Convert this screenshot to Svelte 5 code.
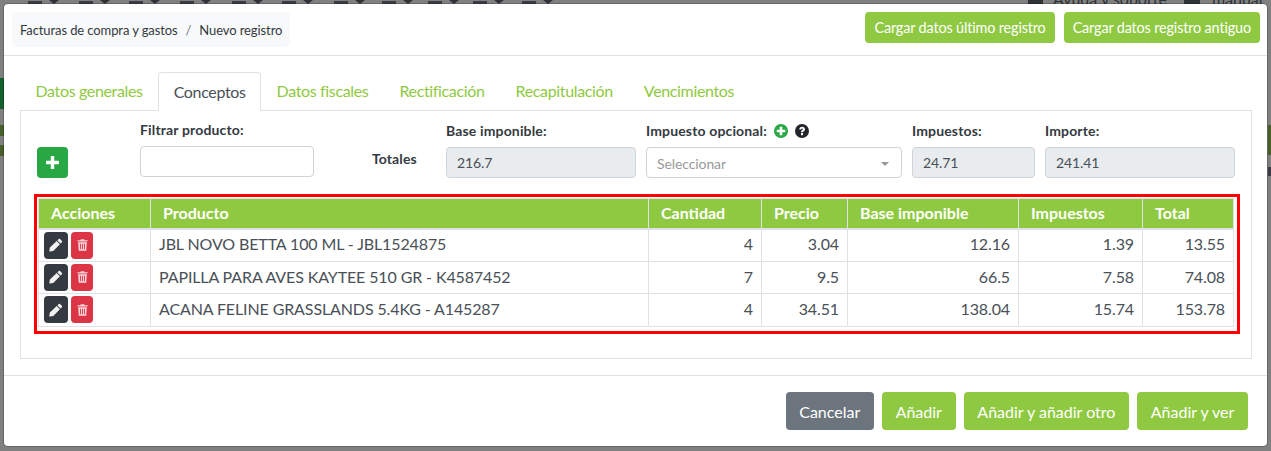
<script>
  const tabs = ['Datos generales', 'Conceptos', 'Datos fiscales', 'Rectificación', 'Recapitulación', 'Vencimientos'];
  const columns = ['Acciones', 'Producto', 'Cantidad', 'Precio', 'Base imponible', 'Impuestos', 'Total'];
  const rows = [
    { name: 'JBL NOVO BETTA 100 ML - JBL1524875', qty: 4, price: 3.04, base: 12.16, tax: 1.39, total: 13.55 },
    { name: 'PAPILLA PARA AVES KAYTEE 510 GR - K4587452', qty: 7, price: 9.5, base: 66.5, tax: 7.58, total: 74.08 },
    { name: 'ACANA FELINE GRASSLANDS 5.4KG - A145287', qty: 4, price: 34.51, base: 138.04, tax: 15.74, total: 153.78 }
  ];
  // toolbar of the page behind the modal, only its lower edge shows
  const carets = [54, 105, 155, 206, 258, 308, 360, 408, 454, 499, 548];
</script>

<div class="overlay">
  <svg class="behind" width="1271" height="451" aria-hidden="true">
    {#each carets as x}
      <path d="M{x - 5} 0h10l-5 4z" fill="#2f3338" />
      <rect x={x - 26} y="1" width="14" height="3" fill="#3a3e44" />
    {/each}
    <rect x="0" y="78" width="4" height="31" fill="#14602c" />
    <rect x="0" y="125" width="4" height="11" fill="#47602a" />
    <rect x="0" y="145" width="4" height="11" fill="#47602a" />
    <rect x="1268" y="125" width="3" height="30" fill="#47602a" />
    <rect x="1268" y="167" width="3" height="9" fill="#3a3a48" />
    <rect x="1028" y="0" width="15" height="4" fill="#2f3338" />
    <rect x="1184" y="0" width="16" height="4" fill="#2f3338" />
  </svg>
  <div class="behind-text"><span>Ayuda y soporte</span><span>manual</span></div>

  <div class="modal">
    <header class="head">
      <nav class="crumbs"><span>Facturas de compra y gastos</span><i>/</i><span>Nuevo registro</span></nav>
      <div class="head-actions">
        <button class="btn green small">Cargar datos último registro</button>
        <button class="btn green small">Cargar datos registro antiguo</button>
      </div>
    </header>

    <div class="body">
      <ul class="tabs">
        {#each tabs as tab}
          <li class:active={tab === 'Conceptos'}>{tab}</li>
        {/each}
      </ul>

      <section class="pane">
        <div class="filters">
          <button class="add" aria-label="Añadir">
            <svg viewBox="0 0 14 14" width="15" height="15"><path d="M5.4 1h3.2v4.400H13v3.200H8.600V13H5.400V8.600H1V5.400h4.400z" fill="#fff"/></svg>
          </button>
          <label class="field filter"><span>Filtrar producto:</span><input type="text" /></label>
          <div class="totals">Totales</div>
          <label class="field base"><span>Base imponible:</span><input type="text" value="216.7" disabled /></label>
          <div class="field optional">
            <span>Impuesto opcional:
              <svg class="ic" viewBox="0 0 16 16" width="14" height="14"><circle cx="8" cy="8" r="8" fill="#28a745"/><path d="M6.500 3.200h3v3.300h3.300v3H9.500v3.300h-3V9.500H3.200v-3h3.300z" fill="#fff"/></svg>
              <svg class="ic second" viewBox="0 0 16 16" width="14" height="14"><circle cx="8" cy="8" r="8" fill="#212529"/><path d="M4.900 6.200C5 4.400 6.300 3.100 8.200 3.100c1.800 0 3.200 1.100 3.200 2.800 0 1.200-.7 1.900-1.500 2.400-.6.400-.7.600-.7 1.100H6.900c0-1.200.4-1.800 1.200-2.300.6-.4.9-.7.900-1.100 0-.5-.4-.8-.9-.8-.6 0-1 .4-1.100 1.100zM6.900 10.400h2.300v2.400H6.900z" fill="#fff"/></svg>
            </span>
            <div class="select">Seleccionar<b></b></div>
          </div>
          <label class="field tax"><span>Impuestos:</span><input type="text" value="24.71" disabled /></label>
          <label class="field amount"><span>Importe:</span><input type="text" value="241.41" disabled /></label>
        </div>

        <div class="marked">
          <table>
            <thead>
              <tr>
                {#each columns as col}<th>{col}</th>{/each}
              </tr>
            </thead>
            <tbody>
              {#each rows as row}
                <tr>
                  <td class="acts">
                    <button class="mini dark" aria-label="Editar">
                      <svg viewBox="0 0 14 14" width="14" height="14"><path d="M9.700 1.100a1 1 0 0 1 1.400 0l1.800 1.800a1 1 0 0 1 0 1.400l-1.300 1.300-3.200-3.200zM7.700 3.100l3.200 3.200-6.600 6.600-3.500.6a.4.4 0 0 1-.5-.5l.6-3.500z" fill="#f1f1f1"/></svg>
                    </button>
                    <button class="mini red" aria-label="Eliminar">
                      <svg viewBox="0 0 12 14" width="11" height="14"><path d="M4.200.7h3.600l.5 1H11.500v1.500H.5V1.700h3.200zM1.300 4h9.400l-.6 9.300H1.900zM3.300 5.500v6.200h1V5.500zm2.200 0v6.200h1V5.500zm2.200 0v6.200h1V5.500z" fill="#f8d7da" fill-rule="evenodd"/></svg>
                    </button>
                  </td>
                  <td>{row.name}</td>
                  <td class="num">{row.qty}</td>
                  <td class="num">{row.price}</td>
                  <td class="num">{row.base}</td>
                  <td class="num">{row.tax}</td>
                  <td class="num">{row.total}</td>
                </tr>
              {/each}
            </tbody>
          </table>
        </div>
      </section>
    </div>

    <footer class="foot">
      <button class="btn gray">Cancelar</button>
      <button class="btn green">Añadir</button>
      <button class="btn green">Añadir y añadir otro</button>
      <button class="btn green">Añadir y ver</button>
    </footer>
  </div>
</div>

<style>
  :global(body) { background: #808080; font-family: Lato, sans-serif; color: #212529; }
  .overlay { position: relative; width: 1271px; height: 451px; overflow: hidden; padding: 4px 4px 5px 4px; box-sizing: border-box; }
  .behind { position: absolute; left: 0; top: 0; }
  .behind-text { position: absolute; left: 1053px; top: -11px; font-size: 16px; color: #2f3338; display: flex; gap: 45px; white-space: nowrap; }
  .modal { position: relative; background: #fff; height: 442px; border-radius: 4px; display: flex; flex-direction: column; box-shadow: 0 0 0 1px rgba(0, 0, 0, .2); }
  button { font-family: inherit; border: 0; cursor: pointer; }

  .head { height: 52px; box-sizing: border-box; border-bottom: 1px solid #dee2e6; padding: 8px 7px 0 8px; display: flex; justify-content: space-between; align-items: flex-start; }
  .crumbs { height: 35px; background: #f8f9fa; border-radius: 4px; padding: 0 8px; display: flex; align-items: center; font-size: 13px; letter-spacing: -.1px; color: #343a40; white-space: nowrap; }
  .crumbs i { font-style: normal; color: #6c757d; margin: 0 8px; }
  .head-actions { display: flex; gap: 9px; }
  .btn { color: #fff; border-radius: 4px; font-size: 16px; height: 38px; padding: 0 13.7px; }
  .btn.small { font-size: 14.4px; letter-spacing: -.14px; height: 31px; padding: 0 9px; }
  .green { background: #8fc942; }
  .gray { background: #6c757d; }

  .body { flex: 1; padding: 16px 15px 0 16px; }
  .tabs { list-style: none; margin: 0; padding: 0; display: flex; height: 39px; letter-spacing: -.35px; }
  .tabs li { color: #8fc942; font-size: 16px; padding: 0 15.5px; line-height: 38px; height: 39px; box-sizing: border-box; }
  .tabs li.active { color: #495057; background: #fff; border: 1px solid #dee2e6; border-bottom-color: #fff; border-radius: 4px 4px 0 0; padding: 0 14.5px; position: relative; z-index: 1; }
  .pane { border: 1px solid #dee2e6; margin-top: -1px; height: 249px; box-sizing: border-box; padding: 0 13px; }

  .filters { display: flex; align-items: flex-start; height: 83px; }
  .field { display: block; font-size: 14px; font-weight: 700; letter-spacing: .15px; color: #343a40; padding-top: 11px; }
  .field > span { display: block; height: 25px; line-height: 18px; }
  .field input, .select { display: block; box-sizing: border-box; width: 100%; height: 31px; border: 1px solid #ced4da; border-radius: 4px; padding: 0 10px; font: 400 14px Lato, sans-serif; letter-spacing: -.1px; color: #495057; background: #fff; }
  .field input:disabled { background: #e9ecef; }
  .add { width: 31px; height: 31px; margin: 36px 0 0 3px; background: #28a745; border-radius: 4px; display: flex; align-items: center; justify-content: center; padding: 0; flex: none; }
  .filter { width: 174px; margin: -1px 0 0 72px; }
  .totals { width: 74px; margin: 39px 0 0 58px; font-size: 14px; letter-spacing: .1px; color: #343a40; font-weight: 700; }
  .base { width: 190px; }
  .optional { width: 256px; margin-left: 10px; }
  .tax { width: 123px; margin-left: 10px; }
  .amount { width: 190px; margin-left: 10px; }
  .ic { vertical-align: -2px; margin-left: 3px; }
  .ic.second { margin-left: 4px; }
  .select { display: flex; align-items: center; justify-content: space-between; color: #999; padding: 2px 12px 0 10px; }
  .select b { border: 4px solid transparent; border-top-color: #999; border-bottom: 0; }

  .marked { border: 3px solid #f00; padding: 1px 1px 4px; width: 1206px; box-sizing: border-box; }
  table { border-collapse: collapse; width: 1196px; table-layout: fixed; font-size: 16px; color: #495057; }
  th { background: #8fc942; color: #fff; font-weight: 700; font-size: 16px; text-align: left; height: 30px; padding: 0 12px 2px; border: 1px solid #dee2e6; border-bottom-width: 2px; box-sizing: border-box; }
  th:nth-child(1) { width: 112px; }
  th:nth-child(2) { width: 498px; }
  th:nth-child(3) { width: 113px; }
  th:nth-child(4) { width: 86px; }
  th:nth-child(5) { width: 171px; }
  th:nth-child(6) { width: 124px; }
  td { border: 1px solid #dee2e6; height: 32.6px; padding: 0 8px 2px; box-sizing: border-box; letter-spacing: -.12px; }
  tbody tr:first-child td:not(.acts) { padding-bottom: 4px; }
  td.num { text-align: right; }
  td.acts { padding: 0 0 0 5px; white-space: nowrap; font-size: 0; }
  .mini { width: 24px; height: 27px; border-radius: 4px; padding: 0; margin-right: 3px; display: inline-flex; align-items: center; justify-content: center; vertical-align: middle; }
  .mini.red { width: 22px; margin-right: 0; background: #dc3545; }
  .mini.dark { background: #343a40; }

  .foot { height: 71px; border-top: 1px solid #dee2e6; box-sizing: border-box; padding: 16px 19px 0 0; display: flex; justify-content: flex-end; gap: 8px; }
</style>
